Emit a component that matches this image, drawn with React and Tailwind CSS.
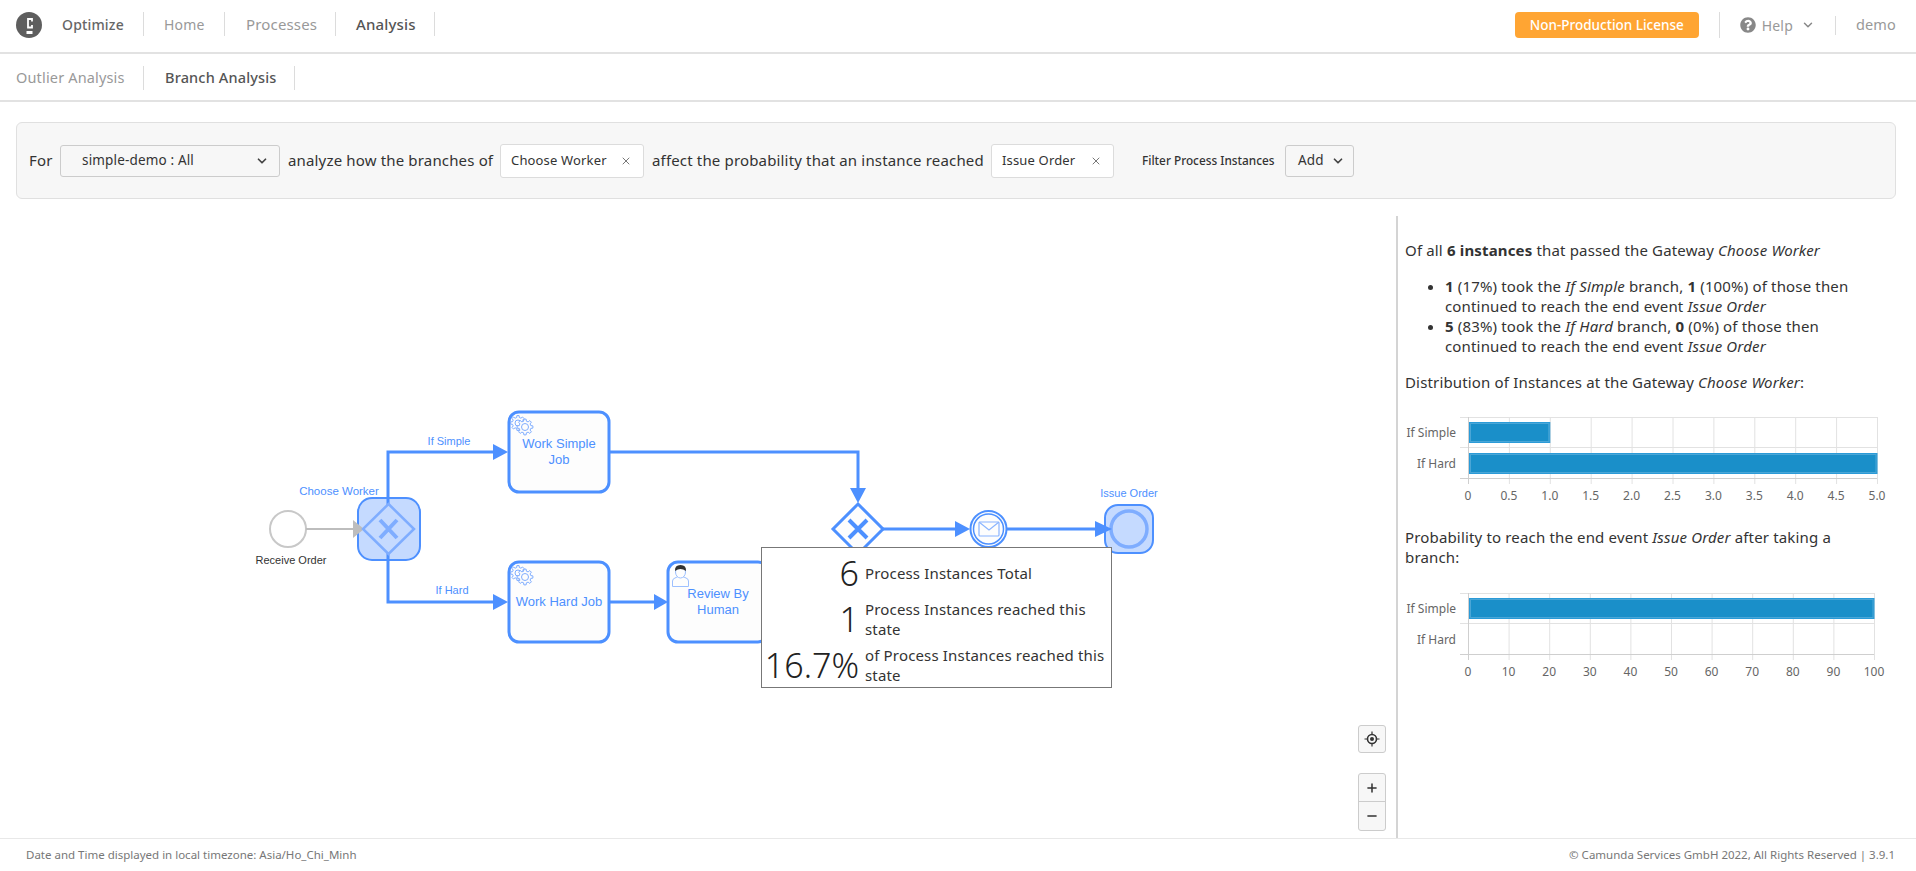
import React from "react";
import { ChevronDown, X, Plus, Minus } from "lucide-react";
import { FaQuestionCircle } from "react-icons/fa";

const BLUE = "#4d90ff";

// outline of a small cog, used in the service task marker
const gearPath = (cx, cy, r) => {
    const teeth = 8;
    let d = "";
    for (let i = 0; i < teeth; i++) {
        const a = (i / teeth) * Math.PI * 2;
        const step = (Math.PI * 2) / teeth;
        const pts = [
            [r * 0.75, a - step * 0.3],
            [r, a - step * 0.18],
            [r, a + step * 0.18],
            [r * 0.75, a + step * 0.3],
        ];
        pts.forEach(([rad, ang], j) => {
            const x = cx + rad * Math.cos(ang);
            const y = cy + rad * Math.sin(ang);
            d += `${i === 0 && j === 0 ? "M" : "L"}${x.toFixed(1)} ${y.toFixed(1)} `;
        });
    }
    return d + "Z";
};

const GearMarker = ({ x, y }) => (
    <g stroke="#7fadff" strokeWidth="1" fill="#fdfdfd">
        <path d={gearPath(x, y, 7.5)} />
        <circle cx={x} cy={y} r="3" />
        <path d={gearPath(x + 7, y + 4, 8)} />
        <circle cx={x + 7} cy={y + 4} r="3.5" />
    </g>
);

const Task = ({ x, y, h = 80, lines }) => (
    <g>
        <rect x={x} y={y} width="100" height={h} rx="10" fill="#fdfdfd" stroke={BLUE} strokeWidth="3" />
        {lines.map((line) => (
            <text key={line.t} x={line.x ?? x + 50} y={line.y} textAnchor="middle" fontSize="13" fill={BLUE}>
                {line.t}
            </text>
        ))}
    </g>
);

const Flow = ({ d, color = BLUE, width = 3 }) => (
    <path d={d} fill="none" stroke={color} strokeWidth={width} />
);

const Head = ({ points, color = BLUE }) => <polygon points={points} fill={color} />;

const Diagram = () => (
    <svg
        className="block font-['Liberation_Sans',sans-serif] tracking-normal"
        width="1396"
        height="639"
        viewBox="0 199 1396 639"
    >
        {/* highlighted gateway */}
        <rect x="358" y="498" width="62" height="62" rx="14" fill="#c5daff" stroke={BLUE} strokeWidth="2" />

        {/* start event */}
        <circle cx="288" cy="529" r="18" fill="#fff" stroke="#c8c8c8" strokeWidth="2" />
        <Flow d="M306 529H356" color="#bdbdbd" width="2" />
        <Head points="353,520 364,529 353,538" color="#bdbdbd" />
        <text x="291" y="564" textAnchor="middle" fontSize="11" fill="#333">Receive Order</text>

        {/* gateway flows */}
        <Flow d="M388 505V452H495" />
        <Head points="493,444 508,452 493,460" />
        <Flow d="M388 553V602H495" />
        <Head points="493,594 508,602 493,610" />
        <polygon points="388.5,504 414,529 388.5,554 363,529" fill="none" stroke="#7fadff" strokeWidth="2.5" />
        <path d="M380 520L397 538M397 520L380 538" stroke="#7fadff" strokeWidth="4" fill="none" />
        <text x="339" y="495" textAnchor="middle" fontSize="11.5" fill={BLUE}>Choose Worker</text>
        <text x="449" y="445" textAnchor="middle" fontSize="11" fill={BLUE}>If Simple</text>
        <text x="452" y="594" textAnchor="middle" fontSize="11" fill={BLUE}>If Hard</text>

        {/* tasks */}
        <Task x={509} y={412} lines={[{ t: "Work Simple", y: 448 }, { t: "Job", y: 464 }]} />
        <GearMarker x={518} y={423} />
        <Task x={509} y={562} lines={[{ t: "Work Hard Job", y: 606 }]} />
        <GearMarker x={518} y={573} />
        <Flow d="M610 602H656" />
        <Head points="654,594 668,602 654,610" />
        <Task x={668} y={562} lines={[{ t: "Review By", y: 598 }, { t: "Human", y: 614 }]} />

        {/* user marker */}
        <g stroke="#9dc0ff" strokeWidth="1" fill="#fdfdfd">
            <path d="M672.5 586.5V581Q672.5 578.5 676 577.5L678 576.5H682.5L685 577.5Q688.5 578.5 688.5 581V586.5Z" />
            <ellipse cx="680.5" cy="572" rx="5" ry="6" />
        </g>
        <path d="M675 571Q674.5 565 680.5 565Q686.5 565 686 571Q680.5 567 675 571Z" fill="#333" />

        {/* top flow into the second gateway */}
        <Flow d="M610 452H858V490" />
        <Head points="850,488 858,503 866,488" />
        <polygon points="858,504 883,529 858,554 833,529" fill="#fdfdfd" stroke={BLUE} strokeWidth="3" />
        <path d="M849 520L867 538M867 520L849 538" stroke={BLUE} strokeWidth="4" fill="none" />

        {/* message event */}
        <Flow d="M883 529H957" />
        <Head points="955,521 970,529 955,537" />
        <circle cx="988.5" cy="529" r="18" fill="#fdfdfd" stroke={BLUE} strokeWidth="2" />
        <circle cx="988.5" cy="529" r="15" fill="#fdfdfd" stroke={BLUE} strokeWidth="1.5" />
        <rect x="979" y="522" width="20" height="14" rx="1" fill="none" stroke="#8ab4ff" strokeWidth="1.2" />
        <path d="M979 522L989 530L999 522" fill="none" stroke="#8ab4ff" strokeWidth="1.2" />

        {/* end event */}
        <rect x="1105" y="505" width="48" height="48" rx="13" fill="#c5daff" stroke={BLUE} strokeWidth="2" />
        <Flow d="M1007 529H1097" />
        <circle cx="1129" cy="529" r="18" fill="#c5daff" stroke="#7fadff" strokeWidth="3.5" />
        <Head points="1095,521 1112,529 1095,537" />
        <text x="1129" y="497" textAnchor="middle" fontSize="11" fill={BLUE}>Issue Order</text>
    </svg>
);

const BarChart = ({ ticks, max, right, bars }) => {
    const left = 62;
    const scale = (v) => left + (v / max) * (right - left);
    return (
        <svg className="block tracking-normal" width="500" height="95" viewBox="0 0 500 95">
            {ticks.map((t) => (
                <line key={t} x1={scale(+t) + 0.5} x2={scale(+t) + 0.5} y1="8" y2="75" stroke="#e2e2e2" />
            ))}
            <line x1="54" x2={right} y1="8.5" y2="8.5" stroke="#e2e2e2" />
            <line x1="54" x2={right} y1="38.5" y2="38.5" stroke="#e2e2e2" />
            <line x1="54" x2={right} y1="69.5" y2="69.5" stroke="#cfcfcf" />
            <line x1={left + 0.5} x2={left + 0.5} y1="8" y2="75" stroke="#cfcfcf" />
            {bars.map((b) =>
                b.value > 0 ? (
                    <g key={b.label}>
                        <rect
                            x={left + 1.5}
                            y={b.y + 0.5}
                            width={scale(b.value) - left - 1.5}
                            height="20"
                            fill="#1a8fc9"
                            stroke="#2b9bd8"
                        />
                        <rect
                            x={left + 2.5}
                            y={b.y + 1.5}
                            width={scale(b.value) - left - 3.5}
                            height="18"
                            fill="none"
                            stroke="#4aa6d6"
                        />
                    </g>
                ) : null
            )}
            {bars.map((b) => (
                <text key={b.label} x="50" y={b.y + 15} textAnchor="end" fontSize="12" fill="#666">
                    {b.label}
                </text>
            ))}
            {ticks.map((t) => (
                <text key={t} x={scale(+t)} y="91" textAnchor="middle" fontSize="12" fill="#666">
                    {t}
                </text>
            ))}
        </svg>
    );
};

const NavLink = ({ children, active, className }) => (
    <div
        className={`h-6 flex items-center border-r border-[#dcdcdc] ${
            active ? "text-[#555] font-medium" : "text-[#999]"
        } ${className}`}
    >
        {children}
    </div>
);

const Chip = ({ children, className }) => (
    <div
        className={`h-[34px] flex items-center justify-between bg-white border border-[#dcdcdc] rounded-[3px] pl-[10px] pr-[11px] text-[13px] text-[#333] ${className}`}
    >
        {children}
        <X size={12} strokeWidth={1.6} className="text-[#555]" />
    </div>
);

const StatRow = ({ value, children }) => (
    <div className="h-[46px] flex items-center">
        <div className="w-[97px] shrink-0 text-right text-[34px] font-light leading-none tracking-normal text-[#222]">{value}</div>
        <div className="ml-[6px] w-[246px] leading-5 text-[#333]">{children}</div>
    </div>
);

const App = () => {
    return (
        <div className="h-[871px] w-[1916px] overflow-hidden flex flex-col bg-white text-[15px] tracking-[0.16px] text-[#333] font-['Noto_Sans',sans-serif]">
            {/* top bar */}
            <header className="h-[54px] shrink-0 flex items-start border-b-2 border-[#e2e2e2] pt-3 pr-5">
                <div className="ml-4 w-[26px] h-[26px] rounded-full bg-[#5e5e5e] flex items-center justify-center">
                    <svg width="26" height="26" viewBox="0 0 26 26">
                        <path d="M16 9.5V7H12V15.5H16V13" fill="none" stroke="#fff" strokeWidth="1.8" />
                        <rect x="10.5" y="19" width="6" height="3" fill="#fff" />
                    </svg>
                </div>
                <div className="ml-5 w-[82px] h-6 flex items-center border-r border-[#dcdcdc] text-[14px] font-medium text-[#666]">Optimize</div>
                <NavLink className="w-[81px] pl-[20px] text-[14px]">Home</NavLink>
                <NavLink className="w-[111px] pl-[21px]">Processes</NavLink>
                <NavLink active className="w-[99px] pl-[20px]">Analysis</NavLink>
                <div className="ml-auto w-[184px] h-[26px] rounded-[4px] bg-[#ffa533] text-white font-medium text-[13.5px] tracking-normal flex items-center justify-center">
                    Non-Production License
                </div>
                <div className="ml-5 h-[26px] w-px bg-[#dcdcdc]" />
                <div className="ml-5 h-[26px] flex items-center text-[14px] text-[#999]">
                    <FaQuestionCircle size={16} className="text-[#888]" />
                    <span className="ml-[6px]">Help</span>
                    <ChevronDown size={14} strokeWidth={2.5} className="ml-[8px] text-[#888]" />
                </div>
                <div className="ml-[20px] mt-1 h-[19px] w-px bg-[#dcdcdc]" />
                <div className="ml-5 h-[26px] flex items-center text-[14.5px] text-[#999]">demo</div>
            </header>

            {/* sub nav */}
            <nav className="h-12 shrink-0 flex items-center border-b-2 border-[#e2e2e2] pl-4 pt-[2px] text-[14.5px]">
                <NavLink className="w-[128px]">Outlier Analysis</NavLink>
                <NavLink active className="w-[151px] pl-[21px]">Branch Analysis</NavLink>
            </nav>

            {/* control panel */}
            <div className="mt-5 mx-4 h-[77px] w-[1880px] shrink-0 flex items-center bg-[#f7f7f7] border border-[#e0e0e0] rounded-[6px] pl-3 text-[#333]">
                <span className="w-[31px]">For</span>
                <div className="w-[220px] h-8 flex items-center justify-between bg-[#f7f7f7] border border-[#ccc] rounded-[3px] pl-[21px] pr-[10px] text-[13.5px]">
                    simple-demo : All
                    <ChevronDown size={14} strokeWidth={3} className="text-[#444]" />
                </div>
                <span className="ml-2 w-[204px] whitespace-nowrap">analyze how the branches of</span>
                <Chip className="ml-2 w-[144px]">Choose Worker</Chip>
                <span className="ml-2 w-[331px] whitespace-nowrap">affect the probability that an instance reached</span>
                <Chip className="ml-2 w-[123px]">Issue Order</Chip>
                <span className="ml-[28px] w-[133px] whitespace-nowrap text-[11.8px] tracking-normal font-medium">Filter Process Instances</span>
                <div className="ml-[10px] w-[69px] h-8 flex items-center justify-between bg-[#f7f7f7] border border-[#ccc] rounded-[3px] pl-3 pr-2 text-[13.5px]">
                    Add
                    <ChevronDown size={14} strokeWidth={3} className="text-[#444]" />
                </div>
            </div>

            {/* diagram and statistics */}
            <main className="flex-1 flex min-h-0">
                <div className="relative w-[1396px] shrink-0">
                    <Diagram />

                    <div className="absolute left-[761px] top-[348px] w-[351px] h-[141px] bg-white border border-[#777] pt-[2px]">
                        <StatRow value="6">Process Instances Total</StatRow>
                        <StatRow value="1">Process Instances reached this state</StatRow>
                        <StatRow value="16.7%">of Process Instances reached this state</StatRow>
                    </div>

                    <button className="absolute left-[1358px] top-[526px] w-[28px] h-[28px] flex items-center justify-center bg-[#f7f7f7] border border-[#ccc] rounded-[3px]">
                        <svg width="16" height="16" viewBox="0 0 16 16" fill="none" stroke="#333">
                            <circle cx="8" cy="8" r="4.5" strokeWidth="1.6" />
                            <circle cx="8" cy="8" r="2" fill="#333" stroke="none" />
                            <path d="M8 0.5V3M8 13V15.5M0.5 8H3M13 8H15.5" strokeWidth="1.2" />
                        </svg>
                    </button>
                    <div className="absolute left-[1358px] top-[574px] w-[28px] flex flex-col bg-[#f7f7f7] border border-[#ccc] rounded-[3px]">
                        <button className="h-7 flex items-center justify-center border-b border-[#ccc]">
                            <Plus size={14} strokeWidth={2.6} className="text-[#333]" />
                        </button>
                        <button className="h-7 flex items-center justify-center">
                            <Minus size={14} strokeWidth={2.6} className="text-[#333]" />
                        </button>
                    </div>
                </div>

                <aside className="mt-[17px] flex-1 border-l-2 border-[#d4d4d4] pl-[7px] pt-[24px] leading-5 text-[#333]">
                    <div className="w-[465px]">
                        <p>
                            Of all <b>6 instances</b> that passed the Gateway <i>Choose Worker</i>
                        </p>
                        <ul className="mt-4 ml-[40px] list-disc">
                            <li>
                                <b>1</b> (17%) took the <i>If Simple</i> branch, <b>1</b> (100%) of those then continued to reach the end event <i>Issue Order</i>
                            </li>
                            <li>
                                <b>5</b> (83%) took the <i>If Hard</i> branch, <b>0</b> (0%) of those then<br />
                                continued to reach the end event <i>Issue Order</i>
                            </li>
                        </ul>
                        <p className="mt-4">
                            Distribution of Instances at the Gateway <i>Choose Worker</i>:
                        </p>
                    </div>
                    <div className="mt-[17px] ml-[1px]">
                        <BarChart
                            ticks={["0", "0.5", "1.0", "1.5", "2.0", "2.5", "3.0", "3.5", "4.0", "4.5", "5.0"]}
                            max={5}
                            right={471}
                            bars={[
                                { label: "If Simple", value: 1, y: 13 },
                                { label: "If Hard", value: 5, y: 44 },
                            ]}
                        />
                    </div>
                    <p className="mt-[23px]">
                        Probability to reach the end event <i>Issue Order</i> after taking a<br />
                        branch:
                    </p>
                    <div className="mt-[18px] ml-[1px]">
                        <BarChart
                            ticks={["0", "10", "20", "30", "40", "50", "60", "70", "80", "90", "100"]}
                            max={100}
                            right={468}
                            bars={[
                                { label: "If Simple", value: 100, y: 13 },
                                { label: "If Hard", value: 0, y: 44 },
                            ]}
                        />
                    </div>
                </aside>
            </main>

            {/* footer */}
            <footer className="h-[33px] shrink-0 flex items-center justify-between border-t border-[#e8e8e8] pl-[26px] pr-[21px] text-[11.5px] tracking-normal text-[#777]">
                <span>Date and Time displayed in local timezone: Asia/Ho_Chi_Minh</span>
                <span>© Camunda Services GmbH 2022, All Rights Reserved | 3.9.1</span>
            </footer>
        </div>
    );
};

export default App;
